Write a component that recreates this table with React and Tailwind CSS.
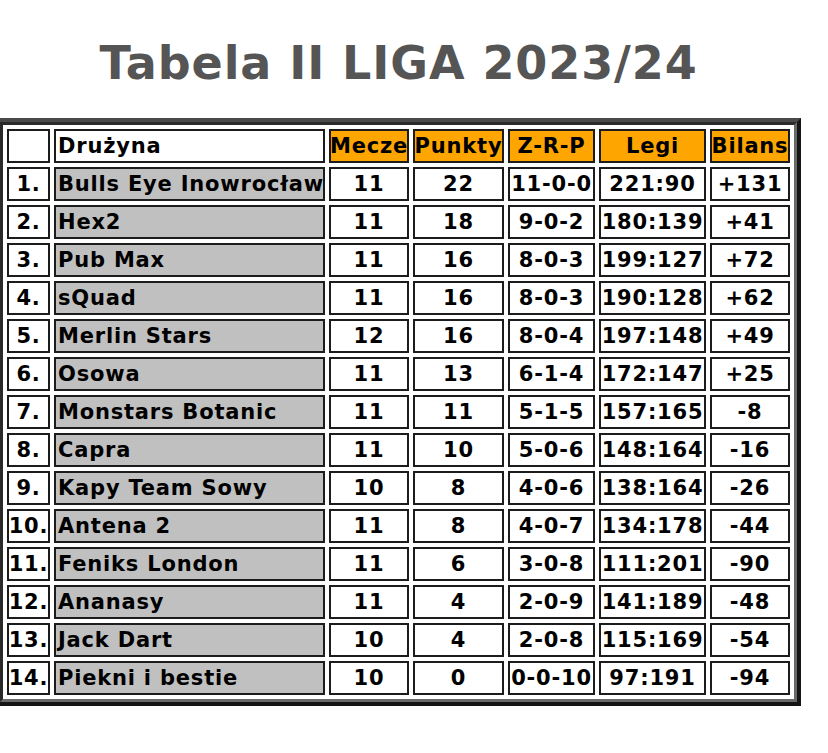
import React from "react";

const rows = [
  ["1.", "Bulls Eye Inowrocław", "11", "22", "11-0-0", "221:90", "+131"],
  ["2.", "Hex2", "11", "18", "9-0-2", "180:139", "+41"],
  ["3.", "Pub Max", "11", "16", "8-0-3", "199:127", "+72"],
  ["4.", "sQuad", "11", "16", "8-0-3", "190:128", "+62"],
  ["5.", "Merlin Stars", "12", "16", "8-0-4", "197:148", "+49"],
  ["6.", "Osowa", "11", "13", "6-1-4", "172:147", "+25"],
  ["7.", "Monstars Botanic", "11", "11", "5-1-5", "157:165", "-8"],
  ["8.", "Capra", "11", "10", "5-0-6", "148:164", "-16"],
  ["9.", "Kapy Team Sowy", "10", "8", "4-0-6", "138:164", "-26"],
  ["10.", "Antena 2", "11", "8", "4-0-7", "134:178", "-44"],
  ["11.", "Feniks London", "11", "6", "3-0-8", "111:201", "-90"],
  ["12.", "Ananasy", "11", "4", "2-0-9", "141:189", "-48"],
  ["13.", "Jack Dart", "10", "4", "2-0-8", "115:169", "-54"],
  ["14.", "Piekni i bestie", "10", "0", "0-0-10", "97:191", "-94"],
];

const base =
  "h-[34px] border-2 border-[#1c1c1c] flex items-center whitespace-nowrap overflow-visible text-[21px] tracking-[0.8px] leading-none font-bold text-black";

function Cell({ children, kind }) {
  if (kind === "team")
    return <div className={`${base} bg-[#c0c0c0] justify-start pl-[2px]`}>{children}</div>;
  if (kind === "head")
    return <div className={`${base} bg-[#ffa500] justify-center`}>{children}</div>;
  if (kind === "headTeam")
    return <div className={`${base} bg-white justify-start pl-[2px]`}>{children}</div>;
  return <div className={`${base} bg-white justify-center`}>{children}</div>;
}

export default function App() {
  return (
    <div className="w-[828px] h-[753px] bg-white font-['DejaVu_Sans',Verdana,sans-serif] overflow-hidden">
      <div className="w-[805px] ml-[-4px]">
        <h1 className="pt-[40px] text-center text-[46px] leading-[46px] font-bold text-[#555555] tracking-[0.9px]">
          Tabela II LIGA 2023/24
        </h1>
        <div className="mt-[32px] border-[4px] border-t-[#4a4a4a] border-l-[#4a4a4a] border-r-[#151515] border-b-[#151515]">
          <div className="border-[3px] border-t-[#2a2a2a] border-l-[#2a2a2a] border-r-[#6a6a6a] border-b-[#6a6a6a] p-[4px]">
            <div className="grid grid-cols-[43px_271px_80px_91px_87px_107px_80px] gap-[4px]">
              <Cell />
              <Cell kind="headTeam">Drużyna</Cell>
              <Cell kind="head">Mecze</Cell>
              <Cell kind="head">Punkty</Cell>
              <Cell kind="head">Z-R-P</Cell>
              <Cell kind="head">Legi</Cell>
              <Cell kind="head">Bilans</Cell>
              {rows.map((r) => (
                <React.Fragment key={r[0]}>
                  <Cell>{r[0]}</Cell>
                  <Cell kind="team">{r[1]}</Cell>
                  <Cell>{r[2]}</Cell>
                  <Cell>{r[3]}</Cell>
                  <Cell>{r[4]}</Cell>
                  <Cell>{r[5]}</Cell>
                  <Cell>{r[6]}</Cell>
                </React.Fragment>
              ))}
            </div>
          </div>
        </div>
      </div>
    </div>
  );
}
